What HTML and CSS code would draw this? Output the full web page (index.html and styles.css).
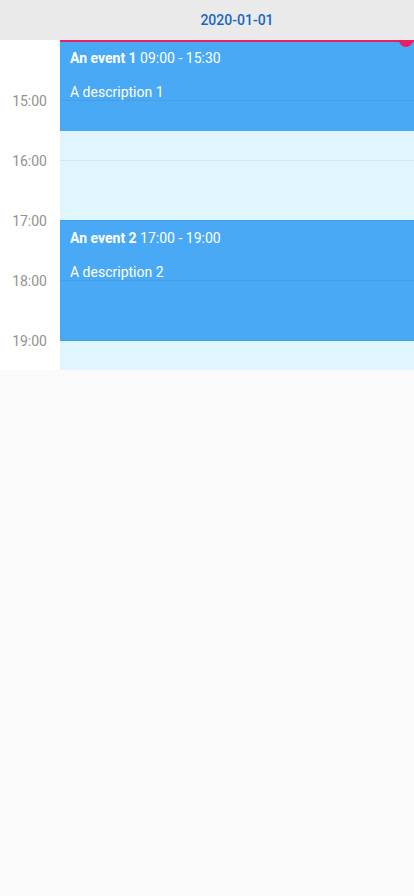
FILE: index.html
```html
<!DOCTYPE html>
<html>
<head>
<meta charset="utf-8">
<link rel="stylesheet" href="styles.css">
</head>
<body>
<div class="calendar">
  <div class="head">
    <div class="head-gutter"></div>
    <div class="head-day">2020-01-01</div>
  </div>
  <div class="body">
    <div class="times">
      <div class="time">15:00</div>
      <div class="time">16:00</div>
      <div class="time">17:00</div>
      <div class="time">18:00</div>
      <div class="time">19:00</div>
    </div>
    <div class="day">
      <div class="slot"></div>
      <div class="slot"></div>
      <div class="slot"></div>
      <div class="slot"></div>
      <div class="slot"></div>
      <div class="slot half"></div>
      <div class="event ev1">
        <div class="ev-title"><strong>An event 1</strong> 09:00 - 15:30</div>
        <div class="ev-desc">A description 1</div>
      </div>
      <div class="event ev2">
        <div class="ev-title"><strong>An event 2</strong> 17:00 - 19:00</div>
        <div class="ev-desc">A description 2</div>
      </div>
      <div class="lines">
        <div class="line"></div>
        <div class="line"></div>
        <div class="line"></div>
        <div class="line"></div>
        <div class="line"></div>
      </div>
      <div class="now-line"></div>
      <div class="now-dot"></div>
    </div>
  </div>
</div>
</body>
</html>
```

FILE: styles.css
```css
html, body {
  margin: 0;
  padding: 0;
  background: #fafafa;
  font-family: Roboto, "Liberation Sans", sans-serif;
}
.calendar {
  width: 414px;
}
.head {
  display: flex;
  height: 40px;
  background: #eaeaea;
}
.head-gutter {
  width: 60px;
}
.head-day {
  flex: 1;
  text-align: center;
  line-height: 40px;
  font-size: 14px;
  font-weight: 500;
  color: #1867c0;
}
.body {
  display: flex;
  height: 330px;
}
.times {
  width: 60px;
  background: #ffffff;
  padding-top: 51px;
  box-sizing: border-box;
}
.time {
  height: 60px;
  line-height: 20px;
  font-size: 14px;
  color: #929292;
  text-align: right;
  padding-right: 13px;
}
.day {
  flex: 1;
  position: relative;
  background: #e1f5fe;
  overflow: hidden;
}
.slot {
  height: 60px;
}
.slot.half {
  height: 30px;
}
.lines {
  position: absolute;
  left: 0;
  right: 0;
  top: 60px;
  display: flex;
  flex-direction: column;
  gap: 59px;
  pointer-events: none;
}
.line {
  height: 1px;
  background: rgba(0, 60, 100, 0.08);
}
.event {
  position: absolute;
  left: 0;
  right: 0;
  background: #49a9f4;
  color: #ffffff;
  font-size: 14px;
  padding: 8px 10px;
  box-sizing: border-box;
}
.ev1 {
  top: 0;
  height: 91px;
}
.ev2 {
  top: 180px;
  height: 121px;
}
.ev-title {
  line-height: 20px;
}
.ev-title strong {
  font-weight: 700;
}
.ev-desc {
  line-height: 20px;
  margin-top: 14px;
}
.now-line {
  position: absolute;
  left: 0;
  right: 0;
  top: 0;
  height: 2px;
  background: #ea1e63;
}
.now-dot {
  position: absolute;
  right: 1px;
  top: -7px;
  width: 14px;
  height: 14px;
  border-radius: 50%;
  background: #ea1e63;
}
```
